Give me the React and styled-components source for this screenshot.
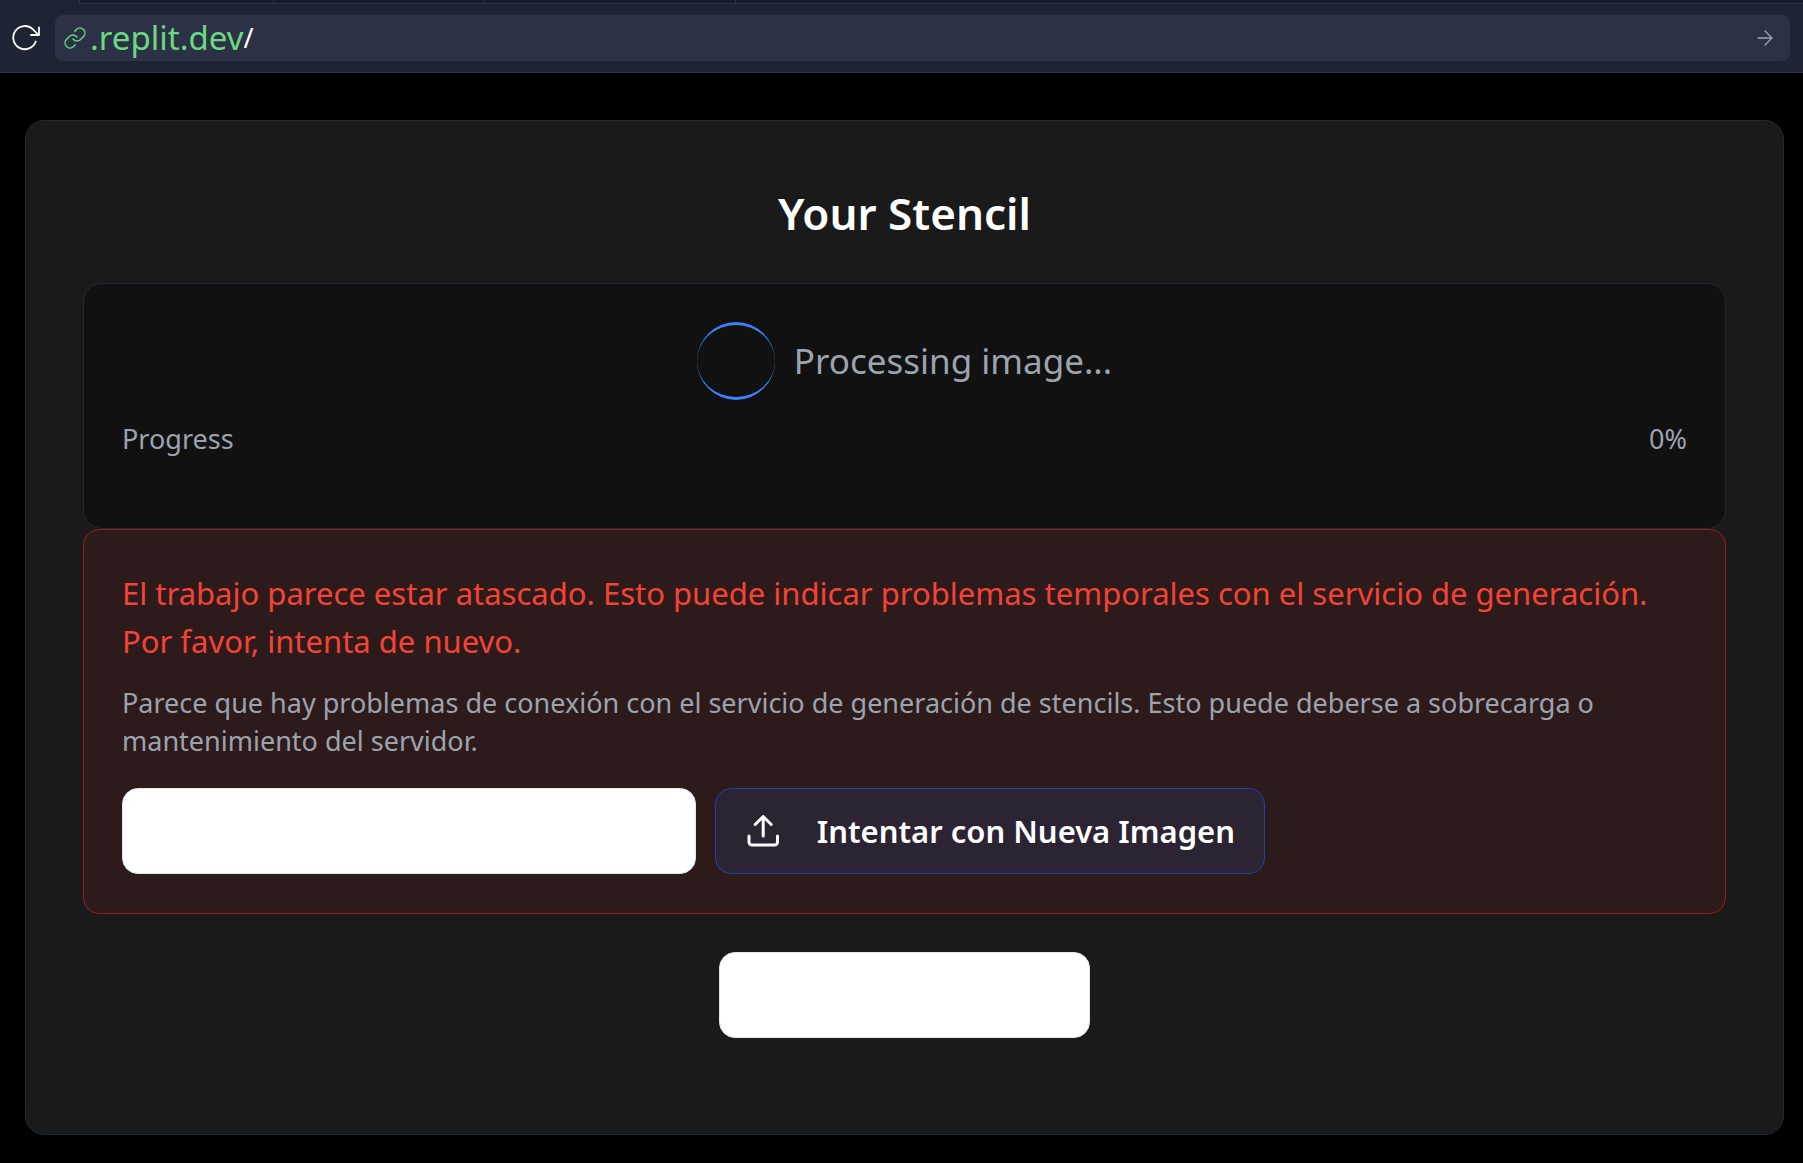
import React, { useState } from "react";
import styled, { createGlobalStyle } from "styled-components";

const GlobalStyle = createGlobalStyle`
  * { box-sizing: border-box; }
  body {
    margin: 0;
    background: #000;
    color: #fff;
    font-family: "Noto Sans", "Open Sans", sans-serif;
  }
  h1, p { margin: 0; }
  button, input { font: inherit; color: inherit; }
`;

const TabStrip = styled.div`
  display: flex;
  height: 4px;
  background: #171d2c;
  border-bottom: 1px solid #2b3245;
`;

const Tab = styled.div`
  flex: ${(p) => (p.$width ? `0 0 ${p.$width}px` : "1")};
  height: ${(p) => (p.$active ? 4 : 3)}px;
  background: ${(p) => (p.$active ? "#1e2433" : "transparent")};
  border-right: ${(p) => (p.$width ? "1px solid #2b3245" : "0")};
`;

const Toolbar = styled.header`
  display: flex;
  align-items: center;
  gap: 13px;
  padding: 11px 13px 11px 10px;
  background: #1e2433;
  border-bottom: 1px solid #2b3245;
`;

const IconButton = styled.button`
  display: flex;
  padding: 0;
  border: 0;
  background: none;
  color: ${(p) => p.$color || "#fff"};
  cursor: pointer;
`;

const AddressBar = styled.form`
  display: flex;
  flex: 1;
  align-items: center;
  height: 46px;
  padding: 0 16px 0 8px;
  border-radius: 8px;
  background: #2c3145;
  color: #6bd982;
`;

const Host = styled.label`
  margin-left: 3px;
  font-size: 33px;
  line-height: 46px;
`;

const PathInput = styled.input`
  flex: 1;
  min-width: 0;
  padding: 0;
  border: 0;
  outline: 0;
  background: none;
  color: #fff;
  font-size: 27px;
  line-height: 46px;
`;

const Page = styled.main`
  padding: 47px 19px 28px 25px;
`;

const Card = styled.section`
  padding: 57px 57px 96px;
  border: 1px solid #1f2937;
  border-radius: 19px;
  background: #1a1a1a;
`;

const Title = styled.h1`
  margin-bottom: 34px;
  font-size: 44px;
  font-weight: 600;
  line-height: 71px;
  text-align: center;
`;

const Panel = styled.div`
  padding: ${(p) => (p.$error ? 39 : 38)}px 38px;
  border: 1px solid ${(p) => (p.$error ? "#991b1b" : "#1f2937")};
  border-radius: ${(p) => (p.$error ? 16 : 19)}px;
  background: ${(p) => (p.$error ? "#2d1b1b" : "#111")};
`;

const Status = styled.div`
  display: flex;
  align-items: center;
  justify-content: center;
  gap: 19px;
  margin-bottom: 20px;
  color: #9ca3af;
  font-size: 35px;
  line-height: 48px;
`;

const Spinner = styled.span`
  width: 78px;
  height: 78px;
  border: solid #3b82f6;
  border-width: 3px 0;
  border-radius: 50%;
`;

const ProgressRow = styled.div`
  display: flex;
  justify-content: space-between;
  color: #9ca3af;
  font-size: 27px;
  line-height: 38px;
`;

const ProgressTrack = styled.div`
  height: 13px;
  margin-top: 19px;
  border-radius: 6px;
`;

const ErrorText = styled.p`
  margin-bottom: 19px;
  color: #f44336;
  font-size: 31px;
  line-height: 48px;
`;

const ErrorHint = styled.p`
  margin-bottom: 28px;
  color: #9ca3af;
  font-size: 27px;
  line-height: 38px;
`;

const Actions = styled.div`
  display: flex;
  flex-wrap: wrap;
  justify-content: ${(p) => (p.$center ? "center" : "flex-start")};
  gap: 19px;
  margin-top: ${(p) => (p.$center ? 38 : 0)}px;
`;

const Button = styled.button`
  display: flex;
  align-items: center;
  justify-content: space-between;
  width: ${(p) => p.$width}px;
  height: 86px;
  padding: 0 29px;
  border: 1px solid ${(p) => (p.$outline ? "#1e40af" : "#e5e5e5")};
  border-radius: 16px;
  background: ${(p) => (p.$outline ? "#2c2333" : "#fff")};
  font-size: 31px;
  font-weight: 600;
  line-height: 38px;
  white-space: nowrap;
  cursor: pointer;
`;

const ReloadIcon = () => (
  <svg width="32" height="32" viewBox="0 0 32 32" fill="none" stroke="currentColor" strokeWidth="1.8" strokeLinecap="round" strokeLinejoin="round" aria-hidden="true">
    <path d="M25.800 19.500A11.600 11.600 0 1 1 23 7.300L28.500 13" />
    <path d="M29 5.500V13h-8" />
  </svg>
);

const LinkIcon = () => (
  <svg width="24" height="24" viewBox="0 0 24 24" fill="none" stroke="currentColor" strokeWidth="1.4" strokeLinecap="round" aria-hidden="true">
    <path d="M10 13a5 5 0 0 0 7.540.540l3-3a5 5 0 0 0-7.070-7.070l-1.720 1.710" />
    <path d="M14 11a5 5 0 0 0-7.540-.540l-3 3a5 5 0 0 0 7.070 7.070l1.710-1.710" />
  </svg>
);

const ArrowIcon = () => (
  <svg width="18" height="18" viewBox="0 0 18 18" fill="none" stroke="currentColor" strokeWidth="1.3" strokeLinecap="round" strokeLinejoin="round" aria-hidden="true">
    <path d="M2 9h14M9 2l7 7-7 7" />
  </svg>
);

const UploadIcon = () => (
  <svg width="38" height="38" viewBox="0 0 38 38" fill="none" stroke="currentColor" strokeWidth="3" strokeLinecap="round" strokeLinejoin="round" aria-hidden="true">
    <path d="M4 24v6a3 3 0 0 0 3 3h22.500a3 3 0 0 0 3-3v-6" />
    <path d="M18.200 24V4.500M10.200 12.500l8-8 8 8" />
  </svg>
);

export default function App() {
  const [path, setPath] = useState("/");

  return (
    <>
      <GlobalStyle />
      <TabStrip>
        <Tab $width={80} $active />
        <Tab $width={194} />
        <Tab $width={210} />
        <Tab $width={252} />
        <Tab />
      </TabStrip>
      <Toolbar>
        <IconButton type="button" aria-label="Reload">
          <ReloadIcon />
        </IconButton>
        <AddressBar onSubmit={(e) => e.preventDefault()}>
          <LinkIcon />
          <Host htmlFor="path">.replit.dev</Host>
          <PathInput id="path" value={path} onChange={(e) => setPath(e.target.value)} />
          <IconButton type="submit" aria-label="Go" $color="#a1a5b0">
            <ArrowIcon />
          </IconButton>
        </AddressBar>
      </Toolbar>
      <Page>
        <Card>
          <Title>Your Stencil</Title>
          <Panel>
            <Status>
              <Spinner />
              <span>Processing image...</span>
            </Status>
            <ProgressRow>
              <span>Progress</span>
              <span>0%</span>
            </ProgressRow>
            <ProgressTrack />
          </Panel>
          <Panel $error role="alert">
            <ErrorText>
              El trabajo parece estar atascado. Esto puede indicar problemas temporales con el servicio de generación. Por favor, intenta de nuevo.
            </ErrorText>
            <ErrorHint>
              Parece que hay problemas de conexión con el servicio de generación de stencils. Esto puede deberse a sobrecarga o mantenimiento del servidor.
            </ErrorHint>
            <Actions>
              <Button type="button" $width={574} aria-label="Reintentar" />
              <Button type="button" $width={550} $outline>
                <UploadIcon />
                Intentar con Nueva Imagen
              </Button>
            </Actions>
          </Panel>
          <Actions $center>
            <Button type="button" $width={371} aria-label="Volver" />
          </Actions>
        </Card>
      </Page>
    </>
  );
}
